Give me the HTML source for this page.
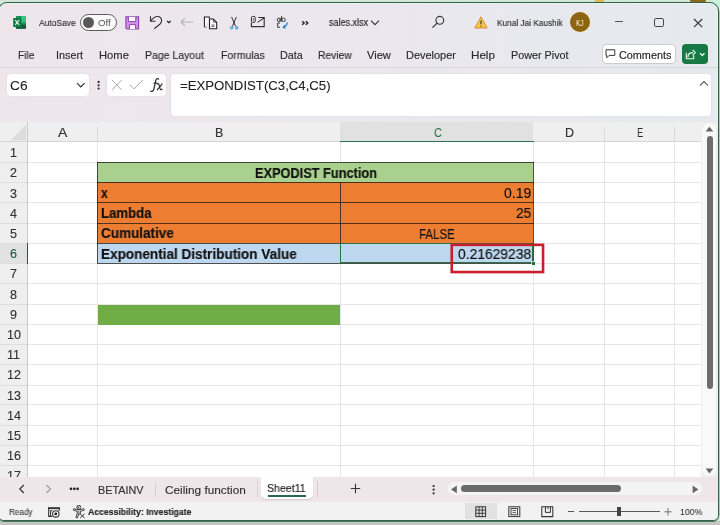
<!DOCTYPE html>
<html><head><meta charset="utf-8">
<style>
html,body{margin:0;padding:0;}
body{width:720px;height:525px;overflow:hidden;position:relative;background:#c8c9c8;font-family:"Liberation Sans",sans-serif;}
.t{position:absolute;white-space:nowrap;line-height:1;transform-origin:0 0;will-change:transform;-webkit-text-stroke:0.15px currentColor;}
.a{position:absolute;}
svg{position:absolute;overflow:visible;}
</style></head><body>
<!-- outside background -->
<div class=a style="left:0;top:0;width:720px;height:4px;background:#d2e6da"></div>
<div class=a style="left:712px;top:0;width:8px;height:525px;background:#cdf0dd"></div>
<div class=a style="left:595px;top:0;width:9px;height:3px;background:#e2b84a"></div>
<div class=a style="left:690px;top:0;width:16px;height:3px;background:#8b6a1a;border-radius:0 0 4px 4px"></div>
<div class=a style="left:0;top:521px;width:720px;height:4px;background:#c4c6c5"></div>
<!-- window -->
<div class=a style="left:-2px;top:2px;width:719px;height:517px;border:1px solid #36604a;border-radius:9px 9px 6px 6px;overflow:hidden;box-shadow:inset 0 0 0 1px #e4f7ec, 0 0.6px 0 0.3px #4f7d63;background:linear-gradient(90deg,#efe6ec 0%,#ebe7ee 45%,#e5eaee 100%);">
  <!-- tab bar and status bar bg -->
  <div class=a style="left:0;top:472.8px;width:721px;height:26.1px;background:#efe6ea;border-top:1px solid #e2dde0;box-sizing:border-box"></div>
  <div class=a style="left:0;top:498.9px;width:721px;height:18.1px;background:#f3f2f3"></div>
</div>

<!-- ===== title bar icons ===== -->
<!-- excel logo -->
<svg style="left:13px;top:16px" width="14" height="14" viewBox="0 0 14 14">
  <rect x="2.9" y="0" width="10.1" height="12.8" rx="0.8" fill="#1a9156"/>
  <rect x="8.2" y="0" width="4.8" height="6.4" rx="0.5" fill="#33c481"/>
  <rect x="2.9" y="8.6" width="10.1" height="4.2" rx="0.6" fill="#185c37"/>
  <rect x="0.2" y="2.1" width="8.2" height="8.8" rx="0.7" fill="#107c41"/>
  <path d="M2.3 4.2 L6.1 8.8 M6.1 4.2 L2.3 8.8" stroke="#f2fbf5" stroke-width="1.05"/>
</svg>
<!-- toggle -->
<div class=a style="left:80px;top:14.3px;width:34.5px;height:14.8px;border:0.9px solid #5c5c5c;border-radius:9px;background:#fbfafb"></div>
<div class=a style="left:83px;top:16.5px;width:11.2px;height:11.2px;border-radius:50%;background:#585858"></div>
<!-- save -->
<svg style="left:125px;top:15.5px" width="15" height="14" viewBox="0 0 15 14">
  <path d="M0.9 0.9 H13.6 V13 H1.9 L0.9 12 Z" fill="#d78ee8" stroke="#8e42ac" stroke-width="1.1"/>
  <path d="M3.4 0.9 V5.6 H10.8 V0.9" fill="#fff" stroke="#8e42ac" stroke-width="1"/>
  <path d="M4.4 13 V8.6 H10.6 V13" fill="#fff" stroke="#8e42ac" stroke-width="1"/>
</svg>
<!-- undo -->
<svg style="left:148px;top:15px" width="26" height="15" viewBox="0 0 26 15">
  <path d="M2.5 1.3 V6.2 H7.6" stroke="#333" stroke-width="1.15" fill="none"/>
  <path d="M2.8 6 C4.6 3.4 6.6 1.5 9.3 1.5 C12 1.5 13.6 3.4 13.6 5.6 C13.6 7.2 12.9 8.3 11.8 9.3 L6.2 13.7" stroke="#333" stroke-width="1.15" fill="none"/>
  <path d="M19.1 6.1 L20.9 7.7 L22.7 6.1" stroke="#222" stroke-width="1.3" fill="none"/>
</svg>
<!-- back arrow -->
<svg style="left:180px;top:17px" width="14" height="10" viewBox="0 0 14 10">
  <path d="M1 5 H13.2 M1 5 L5 1.2 M1 5 L5 8.8" stroke="#b3b0b3" stroke-width="1.1" fill="none"/>
</svg>
<!-- copy -->
<svg style="left:203px;top:15.5px" width="16" height="15" viewBox="0 0 16 15">
  <path d="M1.4 11.2 V0.9 H6.3 V2.8" stroke="#1e1e1e" stroke-width="1.05" fill="#fff"/>
  <path d="M1.4 11.2 H3.9" stroke="#8a8a8a" stroke-width="1.05" fill="none"/>
  <path d="M6.5 2.9 H10.2 L13.7 6.4 V12.8 H6.5 Z" stroke="#1e1e1e" stroke-width="1.05" fill="#fff" stroke-linejoin="round"/>
  <path d="M10.3 3 V5.4 Q10.3 6.2 11.1 6.2 H13.6" stroke="#333" stroke-width="0.9" fill="none"/>
  <path d="M8.3 9 H11.5 M8.3 10.6 H11.5" stroke="#555" stroke-width="0.9"/>
</svg>
<!-- scissors -->
<svg style="left:229px;top:15.5px" width="10" height="14" viewBox="0 0 10 14">
  <path d="M2.6 0.9 L6.6 10.4 M7.4 0.9 L3.4 10.4" stroke="#333" stroke-width="1" fill="none"/>
  <circle cx="2.6" cy="11.8" r="1.2" fill="#cfe6f4" stroke="#2f86c4" stroke-width="1"/>
  <circle cx="7.7" cy="11.8" r="1.2" fill="#cfe6f4" stroke="#2f86c4" stroke-width="1"/>
</svg>
<!-- mail-ish -->
<svg style="left:250px;top:15px" width="16" height="13" viewBox="0 0 16 13">
  <rect x="1.4" y="1.4" width="3.8" height="6" rx="1.3" stroke="#333" stroke-width="1" fill="none"/>
  <path d="M3.3 3.2 V6" stroke="#555" stroke-width="0.8"/>
  <path d="M1.4 7.6 V11.6 H14.2 V2.5 H8.3" stroke="#333" stroke-width="1.15" fill="none"/>
  <path d="M7.6 7.4 L13.3 3.4" stroke="#333" stroke-width="1.05" fill="none"/>
  <circle cx="13.4" cy="3.3" r="0.8" fill="#222"/>
</svg>
<!-- spelling -->
<svg style="left:275px;top:15px" width="15" height="15" viewBox="0 0 15 15">
  <ellipse cx="3.7" cy="4.8" rx="1.45" ry="1.75" stroke="#3a3a3a" stroke-width="1" fill="none"/>
  <path d="M5.2 2.9 V6.7" stroke="#3a3a3a" stroke-width="1"/>
  <path d="M6.6 1 V6.7" stroke="#3a3a3a" stroke-width="1"/>
  <ellipse cx="8.6" cy="4.8" rx="1.7" ry="1.75" stroke="#3a3a3a" stroke-width="1" fill="none"/>
  <path d="M5 8 H2.7 V12.3 H5" stroke="#3a3a3a" stroke-width="1" fill="none"/>
  <path d="M12.3 7.3 C12.1 9.8 10.6 11.6 8.6 12.3" stroke="#2b7fc4" stroke-width="1.25" fill="none"/>
  <path d="M9.9 10.2 L8.3 12.4 L10.6 13.2" stroke="#2b7fc4" stroke-width="1.2" fill="none"/>
</svg>
<!-- >> -->
<svg style="left:301px;top:20px" width="9" height="6" viewBox="0 0 9 6">
  <path d="M1.2 1.2 L3.2 3 L1.2 4.8 M4.8 1.2 L6.8 3 L4.8 4.8" stroke="#222" stroke-width="1.35" fill="none"/>
</svg>
<!-- filename chevron -->
<svg style="left:370px;top:19px" width="11" height="8" viewBox="0 0 11 8">
  <path d="M1 1.6 L5 5.6 L9 1.6" stroke="#333" stroke-width="1.1" fill="none"/>
</svg>
<!-- search -->
<svg style="left:431px;top:15px" width="15" height="15" viewBox="0 0 15 15">
  <circle cx="8.8" cy="5.3" r="3.9" stroke="#333" stroke-width="1.1" fill="none"/>
  <path d="M6.1 8.1 L1.5 12.7" stroke="#333" stroke-width="1.2"/>
</svg>
<!-- warning -->
<svg style="left:474px;top:15.5px" width="14" height="13" viewBox="0 0 14 13">
  <path d="M7 0.9 L13.2 12 H0.8 Z" fill="#f6c64a" stroke="#e08b2b" stroke-width="1" stroke-linejoin="round"/>
  <path d="M7 4.5 V8.3" stroke="#3b3b3b" stroke-width="1.2"/>
  <circle cx="7" cy="10.1" r="0.7" fill="#3b3b3b"/>
</svg>
<!-- avatar -->
<div class=a style="left:569.5px;top:12px;width:20px;height:20px;border-radius:50%;background:#8b6511;box-shadow:0 0 0 0.6px #f4e8c8"></div>
<!-- window controls -->
<div class=a style="left:615px;top:21.2px;width:8.2px;height:1.3px;background:#555"></div>
<div class=a style="left:654.3px;top:18px;width:7.4px;height:7.4px;border:1.2px solid #444;border-radius:1.8px"></div>
<svg style="left:693px;top:17.5px" width="10" height="10" viewBox="0 0 10 10">
  <path d="M1 1 L9.2 9.2 M9.2 1 L1 9.2" stroke="#333" stroke-width="1.1"/>
</svg>

<!-- ===== ribbon row ===== -->
<div class=a style="left:0;top:66.5px;width:718px;height:1px;background:#dcd6da"></div>
<div class=a style="left:602.3px;top:44.3px;width:72px;height:18px;background:#fff;border:0.9px solid #cfcacd;border-radius:4px"></div>
<svg style="left:605px;top:49px" width="11" height="10" viewBox="0 0 11 10">
  <path d="M1 0.8 H9.8 V6.4 H4.2 L1.8 8.8 V6.4 H1 Z" stroke="#333" stroke-width="1" fill="none" stroke-linejoin="round"/>
</svg>
<div class=a style="left:682px;top:44.3px;width:26.2px;height:19.3px;background:#177a45;border-radius:4px"></div>
<svg style="left:684px;top:47px" width="22" height="14" viewBox="0 0 22 14">
  <path d="M2.3 5.8 V11.7 H9.7 V8.4" stroke="#e6fbee" stroke-width="1.1" fill="none"/>
  <path d="M3.9 10.2 C3.9 7.3 5.6 5.7 8.9 5.7" stroke="#e6fbee" stroke-width="1.3" fill="none"/>
  <path d="M8.6 2.9 L11.3 5.6 L8.6 8.4" stroke="#e6fbee" stroke-width="1.2" fill="none" stroke-linejoin="round"/>
  <path d="M16.1 6.3 L18.3 8.5 L20.5 6.3" stroke="#e6fbee" stroke-width="1.3" fill="none"/>
</svg>

<!-- ===== formula bar ===== -->
<div class=a style="left:7px;top:73.5px;width:82px;height:22.5px;background:#fff;border-radius:4px;box-shadow:0 0 0 0.6px #e2dde1"></div>
<svg style="left:76px;top:81px" width="10" height="8" viewBox="0 0 10 8">
  <path d="M1 2.2 L4.8 6 L8.6 2.2" stroke="#333" stroke-width="1.2" fill="none"/>
</svg>
<svg style="left:95.5px;top:79.5px" width="5" height="11" viewBox="0 0 5 11">
  <circle cx="2.6" cy="2" r="1.15" fill="#333"/><circle cx="2.6" cy="5.3" r="1.15" fill="#333"/><circle cx="2.6" cy="8.6" r="1.15" fill="#333"/>
</svg>
<div class=a style="left:106.8px;top:74px;width:59.6px;height:22.3px;background:#fff;border-radius:4px;box-shadow:0 0 0 0.6px #e2dde1"></div>
<svg style="left:111px;top:79px" width="12" height="12" viewBox="0 0 12 12">
  <path d="M1 1 L10.6 10.9 M10.6 1 L1 10.9" stroke="#ababab" stroke-width="1"/>
</svg>
<svg style="left:129px;top:79px" width="15" height="11" viewBox="0 0 15 11">
  <path d="M1 5.8 L5 9.9 L14 1" stroke="#ababab" stroke-width="1" fill="none"/>
</svg>
<svg style="left:149px;top:77px" width="15" height="16" viewBox="0 0 15 16">
  <path d="M9.6 2.1 C8.9 1.3 7.4 1.4 6.9 3.2 L4.7 12.6 C4.3 14.2 3.2 14.9 1.7 14.2" stroke="#2a2a2a" stroke-width="1.25" fill="none" stroke-linecap="round"/>
  <path d="M4.6 6.1 H8.5" stroke="#2a2a2a" stroke-width="1.1"/>
  <path d="M8.1 6.9 C9 6.3 9.7 6.6 10.1 8 L11.1 11.7 C11.4 12.9 12.2 13 13.1 12.2" stroke="#2a2a2a" stroke-width="1.15" fill="none" stroke-linecap="round"/>
  <path d="M13.2 6.9 L8.3 12.9" stroke="#2a2a2a" stroke-width="1.1" stroke-linecap="round"/>
</svg>
<div class=a style="left:170.5px;top:73.5px;width:540.2px;height:42.8px;background:#fff;border-radius:4px;box-shadow:0 0 0 0.6px #e2dde1"></div>
<svg style="left:698.5px;top:80px" width="10" height="7" viewBox="0 0 10 7">
  <path d="M1 5.6 L5 1.6 L9 5.6" stroke="#555" stroke-width="1.05" fill="none"/>
</svg>

<!-- ===== grid ===== -->
<div class=a style="left:0;top:121.5px;width:701px;height:20px;background:#efefef"></div>
<div class=a style="left:0;top:142px;width:27px;height:334.5px;background:#efefef"></div>
<div class=a style="left:28px;top:142px;width:673px;height:334.5px;background:#fff"></div>
<div class=a style="left:340px;top:121.5px;width:193px;height:20px;background:#e1e1e1"></div>
<svg style="left:10px;top:123.5px" width="17" height="17" viewBox="0 0 17 17">
  <path d="M0.8 16.2 H16 V0.4 Z" fill="#dcdcdc"/>
</svg>
<div class=a style="left:97px;top:127px;width:1px;height:14px;background:#dadada"></div>
<div class=a style="left:604px;top:127px;width:1px;height:14px;background:#dadada"></div>
<div class=a style="left:674px;top:127px;width:1px;height:14px;background:#dadada"></div>
<div class=a style="left:0;top:140.8px;width:701px;height:1.6px;background:#d6d6d6"></div>
<div class=a style="left:27px;top:121.5px;width:1px;height:355px;background:#c9c9c9"></div>
<div class=a style="left:0;top:243.00px;width:27px;height:20.2px;background:#e1e1e1"></div>
<div style="position:absolute;left:97.00px;top:142.00px;width:1.00px;height:334.50px;background:#e6e6e6"></div>
<div style="position:absolute;left:340.00px;top:142.00px;width:1.00px;height:334.50px;background:#e6e6e6"></div>
<div style="position:absolute;left:533.00px;top:142.00px;width:1.00px;height:334.50px;background:#e6e6e6"></div>
<div style="position:absolute;left:604.00px;top:142.00px;width:1.00px;height:334.50px;background:#e6e6e6"></div>
<div style="position:absolute;left:674.00px;top:142.00px;width:1.00px;height:334.50px;background:#e6e6e6"></div>
<div style="position:absolute;left:28.00px;top:162.00px;width:673.00px;height:1.00px;background:#e6e6e6"></div>
<div style="position:absolute;left:0.00px;top:162.00px;width:27.00px;height:1.00px;background:#dedede"></div>
<div style="position:absolute;left:28.00px;top:182.00px;width:673.00px;height:1.00px;background:#e6e6e6"></div>
<div style="position:absolute;left:0.00px;top:182.00px;width:27.00px;height:1.00px;background:#dedede"></div>
<div style="position:absolute;left:28.00px;top:202.00px;width:673.00px;height:1.00px;background:#e6e6e6"></div>
<div style="position:absolute;left:0.00px;top:202.00px;width:27.00px;height:1.00px;background:#dedede"></div>
<div style="position:absolute;left:28.00px;top:223.00px;width:673.00px;height:1.00px;background:#e6e6e6"></div>
<div style="position:absolute;left:0.00px;top:223.00px;width:27.00px;height:1.00px;background:#dedede"></div>
<div style="position:absolute;left:28.00px;top:243.00px;width:673.00px;height:1.00px;background:#e6e6e6"></div>
<div style="position:absolute;left:0.00px;top:243.00px;width:27.00px;height:1.00px;background:#dedede"></div>
<div style="position:absolute;left:28.00px;top:263.00px;width:673.00px;height:1.00px;background:#e6e6e6"></div>
<div style="position:absolute;left:0.00px;top:263.00px;width:27.00px;height:1.00px;background:#dedede"></div>
<div style="position:absolute;left:28.00px;top:283.00px;width:673.00px;height:1.00px;background:#e6e6e6"></div>
<div style="position:absolute;left:0.00px;top:283.00px;width:27.00px;height:1.00px;background:#dedede"></div>
<div style="position:absolute;left:28.00px;top:304.00px;width:673.00px;height:1.00px;background:#e6e6e6"></div>
<div style="position:absolute;left:0.00px;top:304.00px;width:27.00px;height:1.00px;background:#dedede"></div>
<div style="position:absolute;left:28.00px;top:324.00px;width:673.00px;height:1.00px;background:#e6e6e6"></div>
<div style="position:absolute;left:0.00px;top:324.00px;width:27.00px;height:1.00px;background:#dedede"></div>
<div style="position:absolute;left:28.00px;top:344.00px;width:673.00px;height:1.00px;background:#e6e6e6"></div>
<div style="position:absolute;left:0.00px;top:344.00px;width:27.00px;height:1.00px;background:#dedede"></div>
<div style="position:absolute;left:28.00px;top:364.00px;width:673.00px;height:1.00px;background:#e6e6e6"></div>
<div style="position:absolute;left:0.00px;top:364.00px;width:27.00px;height:1.00px;background:#dedede"></div>
<div style="position:absolute;left:28.00px;top:385.00px;width:673.00px;height:1.00px;background:#e6e6e6"></div>
<div style="position:absolute;left:0.00px;top:385.00px;width:27.00px;height:1.00px;background:#dedede"></div>
<div style="position:absolute;left:28.00px;top:404.00px;width:673.00px;height:1.00px;background:#e6e6e6"></div>
<div style="position:absolute;left:0.00px;top:404.00px;width:27.00px;height:1.00px;background:#dedede"></div>
<div style="position:absolute;left:28.00px;top:425.00px;width:673.00px;height:1.00px;background:#e6e6e6"></div>
<div style="position:absolute;left:0.00px;top:425.00px;width:27.00px;height:1.00px;background:#dedede"></div>
<div style="position:absolute;left:28.00px;top:445.00px;width:673.00px;height:1.00px;background:#e6e6e6"></div>
<div style="position:absolute;left:0.00px;top:445.00px;width:27.00px;height:1.00px;background:#dedede"></div>
<div style="position:absolute;left:28.00px;top:465.00px;width:673.00px;height:1.00px;background:#e6e6e6"></div>
<div style="position:absolute;left:0.00px;top:465.00px;width:27.00px;height:1.00px;background:#dedede"></div>
<div style="position:absolute;left:97.00px;top:162.00px;width:436.00px;height:20.00px;background:#a9d08e"></div>
<div style="position:absolute;left:97.00px;top:182.00px;width:436.00px;height:61.00px;background:#ed7d31"></div>
<div style="position:absolute;left:97.00px;top:243.00px;width:436.00px;height:20.00px;background:#bdd7ee"></div>
<div style="position:absolute;left:97.50px;top:304.50px;width:242.50px;height:20.00px;background:#70ad47"></div>
<div style="position:absolute;left:97.00px;top:162.00px;width:437.00px;height:1.00px;background:rgba(20,20,20,0.72)"></div>
<div style="position:absolute;left:97.00px;top:182.00px;width:437.00px;height:1.00px;background:rgba(20,20,20,0.72)"></div>
<div style="position:absolute;left:97.00px;top:202.00px;width:437.00px;height:1.00px;background:rgba(20,20,20,0.72)"></div>
<div style="position:absolute;left:97.00px;top:223.00px;width:437.00px;height:1.00px;background:rgba(20,20,20,0.72)"></div>
<div style="position:absolute;left:97.00px;top:243.00px;width:437.00px;height:1.00px;background:rgba(20,20,20,0.72)"></div>
<div style="position:absolute;left:97.00px;top:263.00px;width:437.00px;height:1.00px;background:rgba(20,20,20,0.72)"></div>
<div style="position:absolute;left:97.00px;top:162.00px;width:1.00px;height:101.00px;background:rgba(20,20,20,0.72)"></div>
<div style="position:absolute;left:533.00px;top:162.00px;width:1.00px;height:101.00px;background:rgba(20,20,20,0.72)"></div>
<div style="position:absolute;left:340.00px;top:182.00px;width:1.00px;height:81.00px;background:rgba(20,20,20,0.72)"></div>
<div class=a style="left:340px;top:140.9px;width:193.5px;height:1.5px;background:#2a7350"></div>
<div class=a style="left:26.6px;top:243.00px;width:1.4px;height:20.6px;background:#1f5c3d"></div>
<!-- selection C6 -->
<div class=a style="left:339.6px;top:242.6px;width:193.6px;height:20.5px;border:1.1px solid #2a7149;box-sizing:border-box;"></div>
<div class=a style="left:532px;top:262px;width:3.2px;height:3px;background:#1f6e43;box-shadow:0 0 0 0.6px #fff"></div>
<!-- red highlight -->
<svg style="left:450px;top:243px" width="95" height="31" viewBox="0 0 95 31">
  <rect x="1.75" y="1.85" width="91.3" height="27.2" stroke="#c91f2d" stroke-width="2.6" fill="none"/>
</svg>

<!-- vertical scrollbar -->
<div class=a style="left:701px;top:121.5px;width:17px;height:355px;background:#efefef"></div>
<div class=a style="left:702.3px;top:123px;width:13.8px;height:352.5px;border-radius:7px;background:#f9f9f9"></div>
<svg style="left:705px;top:126px" width="9" height="6" viewBox="0 0 9 6">
  <path d="M0.6 5.6 L4.4 0.8 L8.3 5.6 Z" fill="#666"/>
</svg>
<div class=a style="left:706.5px;top:136px;width:6.4px;height:253px;border-radius:3.2px;background:#6d6d6d"></div>
<svg style="left:705px;top:467.5px" width="9" height="6" viewBox="0 0 9 6">
  <path d="M0.6 0.6 L4.4 5.6 L8.3 0.6 Z" fill="#666"/>
</svg>

<!-- ===== sheet tab bar ===== -->
<svg style="left:18px;top:484px" width="8" height="10" viewBox="0 0 8 10">
  <path d="M5.8 1 L1.8 5 L5.8 9" stroke="#333" stroke-width="1.2" fill="none"/>
</svg>
<svg style="left:45px;top:484px" width="8" height="10" viewBox="0 0 8 10">
  <path d="M1.5 1 L5.5 5 L1.5 9" stroke="#9a9a9a" stroke-width="1.1" fill="none"/>
</svg>
<svg style="left:68px;top:486px" width="12" height="5" viewBox="0 0 12 5">
  <circle cx="3" cy="2.8" r="1.35" fill="#222"/><circle cx="6.3" cy="2.8" r="1.35" fill="#222"/><circle cx="9.6" cy="2.8" r="1.35" fill="#222"/>
</svg>
<div class=a style="left:154.6px;top:482.8px;width:1px;height:14px;background:#d5cfd2"></div>
<div class=a style="left:257.2px;top:481px;width:1px;height:16px;background:#d5cfd2"></div>
<div class=a style="left:316.5px;top:481px;width:1px;height:16px;background:#d5cfd2"></div>
<div class=a style="left:260.6px;top:474px;width:52.2px;height:24.5px;background:#fff;border-radius:0 0 5px 5px;box-shadow:0 0.5px 0.8px rgba(0,0,0,0.12)"></div>
<div class=a style="left:267.8px;top:495.2px;width:37.8px;height:1.8px;background:#2b6a48"></div>
<svg style="left:350px;top:483px" width="11" height="11" viewBox="0 0 11 11">
  <path d="M5.5 0.8 V10.2 M0.8 5.5 H10.2" stroke="#333" stroke-width="1.1"/>
</svg>
<svg style="left:431px;top:484px" width="5" height="12" viewBox="0 0 5 12">
  <circle cx="2.6" cy="2.1" r="1.15" fill="#333"/><circle cx="2.6" cy="5.7" r="1.15" fill="#333"/><circle cx="2.6" cy="9.3" r="1.15" fill="#333"/>
</svg>
<!-- h scrollbar -->
<div class=a style="left:447.5px;top:481.8px;width:254.5px;height:13.5px;border-radius:7px;background:#f5f4f5"></div>
<svg style="left:450px;top:484.5px" width="8" height="9" viewBox="0 0 8 9">
  <path d="M6.8 0.6 L1 4.4 L6.8 8.2 Z" fill="#666"/>
</svg>
<div class=a style="left:461px;top:485.3px;width:160px;height:7px;border-radius:3.5px;background:#6b6b6b"></div>
<svg style="left:692px;top:484.5px" width="8" height="9" viewBox="0 0 8 9">
  <path d="M0.6 0.6 L6.4 4.4 L0.6 8.2 Z" fill="#666"/>
</svg>

<!-- ===== status bar ===== -->
<svg style="left:47px;top:506px" width="14" height="12" viewBox="0 0 14 12">
  <rect x="1.2" y="1.2" width="11.5" height="1.9" fill="#333"/>
  <path d="M1.7 1.2 V10.4 H5.2" stroke="#333" stroke-width="1.1" fill="none"/>
  <path d="M12.2 1.2 V5" stroke="#333" stroke-width="1.1" fill="none"/>
  <path d="M3.6 10.2 V4.6 H5.4" stroke="#333" stroke-width="1" fill="none"/>
  <circle cx="8.8" cy="7.9" r="3.2" stroke="#333" stroke-width="1.1" fill="#fafafa"/>
  <circle cx="8.8" cy="7.9" r="1.35" fill="#1a1a1a"/>
</svg>
<svg style="left:73px;top:505px" width="13" height="14" viewBox="0 0 13 14">
  <g stroke="#333" stroke-width="2.5" fill="none" stroke-linecap="round" stroke-linejoin="round">
    <circle cx="5.8" cy="2.4" r="1.2"/>
    <path d="M1.2 4.6 C3 5.4 4.5 5.6 5.8 5.6 C7.1 5.6 8.6 5.4 10.4 4.6"/>
    <path d="M5 5.8 V8.6 L3.8 12 M6.6 5.8 V8.2"/>
  </g>
  <g stroke="#f6f6f6" stroke-width="0.8" fill="none" stroke-linecap="round" stroke-linejoin="round">
    <circle cx="5.8" cy="2.4" r="1.2"/>
    <path d="M1.2 4.6 C3 5.4 4.5 5.6 5.8 5.6 C7.1 5.6 8.6 5.4 10.4 4.6"/>
    <path d="M5 5.8 V8.6 L3.8 12 M6.6 5.8 V8.2"/>
  </g>
  <path d="M7.2 8.8 L11.6 13 M11.6 8.8 L7.2 13" stroke="#333" stroke-width="1"/>
</svg>
<div class=a style="left:464.6px;top:503.2px;width:32.3px;height:15.6px;background:#e1e1e1"></div>
<svg style="left:474.5px;top:506px" width="12" height="12" viewBox="0 0 12 12">
  <rect x="0.8" y="0.8" width="9.8" height="9.8" stroke="#333" stroke-width="1" fill="none"/>
  <path d="M4.1 0.8 V10.6 M7.3 0.8 V10.6 M0.8 4.1 H10.6 M0.8 7.3 H10.6" stroke="#333" stroke-width="0.9"/>
</svg>
<svg style="left:507.5px;top:506px" width="13" height="12" viewBox="0 0 13 12">
  <rect x="0.8" y="0.8" width="11" height="9.8" stroke="#333" stroke-width="1" fill="none"/>
  <rect x="3" y="2.6" width="6.6" height="6.2" stroke="#333" stroke-width="0.9" fill="none"/>
  <path d="M4.5 4.6 H8 M4.5 6.6 H8" stroke="#333" stroke-width="0.8"/>
</svg>
<svg style="left:540.5px;top:506px" width="13" height="12" viewBox="0 0 13 12">
  <path d="M0.8 0.8 H11.8 V10.6 H0.8 Z" stroke="#333" stroke-width="1.05" fill="none"/>
  <path d="M4.4 0.8 V6.4 H9.4 V0.8" stroke="#333" stroke-width="1" fill="none"/>
  <path d="M6.9 0.8 V3.2" stroke="#333" stroke-width="0.9" fill="none"/>
</svg>
<div class=a style="left:567.6px;top:511px;width:6.3px;height:1.1px;background:#555"></div>
<div class=a style="left:578.7px;top:511px;width:81px;height:1.2px;background:#5a5a5a"></div>
<div class=a style="left:617.2px;top:507.4px;width:3.9px;height:8.4px;background:#444"></div>
<svg style="left:663.5px;top:506.5px" width="9" height="10" viewBox="0 0 9 10">
  <path d="M4 1 V8.6 M0.4 4.8 H7.6" stroke="#666" stroke-width="0.9"/>
</svg>

<div class=t style="left:38.66px;top:18.00px;font-size:9.5px;font-weight:400;color:#303030;transform:scaleX(0.8901);">AutoSave</div>
<div class=t style="left:97.61px;top:17.80px;font-size:9.5px;font-weight:400;color:#555;transform:scaleX(1.0221);-webkit-text-stroke:0;">Off</div>
<div class=t style="left:328.64px;top:18.40px;font-size:10px;font-weight:400;color:#262626;transform:scaleX(0.9023);">sales.xlsx</div>
<div class=t style="left:496.67px;top:18.40px;font-size:9.5px;font-weight:400;color:#303030;transform:scaleX(0.8693);">Kunal Jai Kaushik</div>
<div class=t style="left:575.95px;top:18.80px;font-size:8.5px;font-weight:400;color:#f3e6c4;transform:scaleX(0.7358);">KJ</div>
<div class=t style="left:17.59px;top:49.75px;font-size:10.8px;font-weight:400;color:#2b2b2b;transform:scaleX(0.9430);">File</div>
<div class=t style="left:55.57px;top:49.75px;font-size:10.8px;font-weight:400;color:#2b2b2b;transform:scaleX(0.9942);">Insert</div>
<div class=t style="left:98.55px;top:49.75px;font-size:10.8px;font-weight:400;color:#2b2b2b;transform:scaleX(1.0376);">Home</div>
<div class=t style="left:144.58px;top:49.75px;font-size:10.8px;font-weight:400;color:#2b2b2b;transform:scaleX(0.9703);">Page Layout</div>
<div class=t style="left:220.58px;top:49.75px;font-size:10.8px;font-weight:400;color:#2b2b2b;transform:scaleX(0.9743);">Formulas</div>
<div class=t style="left:279.57px;top:49.75px;font-size:10.8px;font-weight:400;color:#2b2b2b;">Data</div>
<div class=t style="left:317.59px;top:49.75px;font-size:10.8px;font-weight:400;color:#2b2b2b;transform:scaleX(0.9554);">Review</div>
<div class=t style="left:366.56px;top:49.75px;font-size:10.8px;font-weight:400;color:#2b2b2b;transform:scaleX(1.0289);">View</div>
<div class=t style="left:405.56px;top:49.75px;font-size:10.8px;font-weight:400;color:#2b2b2b;transform:scaleX(1.0133);">Developer</div>
<div class=t style="left:470.53px;top:49.75px;font-size:10.8px;font-weight:400;color:#2b2b2b;transform:scaleX(1.0770);">Help</div>
<div class=t style="left:510.57px;top:49.75px;font-size:10.8px;font-weight:400;color:#2b2b2b;">Power Pivot</div>
<div class=t style="left:618.77px;top:49.90px;font-size:10.5px;font-weight:400;color:#262626;transform:scaleX(1.0315);">Comments</div>
<div class=t style="left:10.45px;top:79.00px;font-size:13px;font-weight:400;color:#222;transform:scaleX(1.0587);-webkit-text-stroke:0.1px currentColor;">C6</div>
<div class=t style="left:179.97px;top:79.40px;font-size:13px;font-weight:400;color:#222;transform:scaleX(1.0142);-webkit-text-stroke:0.1px currentColor;">=EXPONDIST(C3,C4,C5)</div>
<div class=t style="left:58.44px;top:127.30px;font-size:12.5px;font-weight:400;color:#333;transform:scaleX(1.1166);">A</div>
<div class=t style="left:215.32px;top:127.30px;font-size:12.5px;font-weight:400;color:#333;transform:scaleX(0.9668);">B</div>
<div class=t style="left:433.76px;top:127.30px;font-size:12.5px;font-weight:400;color:#2a7350;transform:scaleX(0.8716);-webkit-text-stroke:0.1px currentColor;">C</div>
<div class=t style="left:564.81px;top:127.30px;font-size:12.5px;font-weight:400;color:#333;transform:scaleX(0.9837);">D</div>
<div class=t style="left:636.63px;top:127.30px;font-size:12.5px;font-weight:400;color:#333;transform:scaleX(0.7353);">E</div>
<div class=t style="left:255.09px;top:167.00px;font-size:13.8px;font-weight:700;color:#111;transform:scaleX(0.9247);">EXPODIST Function</div>
<div class=t style="left:100.71px;top:186.90px;font-size:13.8px;font-weight:700;color:#111;transform:scaleX(0.8810);">x</div>
<div class=t style="left:100.67px;top:207.00px;font-size:13.8px;font-weight:700;color:#111;transform:scaleX(0.9556);">Lambda</div>
<div class=t style="left:100.66px;top:227.10px;font-size:13.8px;font-weight:700;color:#111;transform:scaleX(0.9786);">Cumulative</div>
<div class=t style="left:100.66px;top:247.50px;font-size:13.8px;font-weight:700;color:#111;transform:scaleX(0.9817);">Exponential Distribution Value</div>
<div class=t style="left:504.24px;top:186.00px;font-size:14px;font-weight:400;color:#111;">0.19</div>
<div class=t style="left:516.15px;top:206.20px;font-size:14px;font-weight:400;color:#111;transform:scaleX(0.9752);">25</div>
<div class=t style="left:419.34px;top:226.60px;font-size:14px;font-weight:400;color:#111;transform:scaleX(0.8193);">FALSE</div>
<div class=t style="left:458.20px;top:246.80px;font-size:14px;font-weight:400;color:#111;transform:scaleX(0.9883);">0.21629238</div>
<div class=t style="left:98.17px;top:484.90px;font-size:10.8px;font-weight:400;color:#333;">BETAINV</div>
<div class=t style="left:165.23px;top:484.90px;font-size:10.8px;font-weight:400;color:#333;transform:scaleX(1.0951);">Ceiling function</div>
<div class=t style="left:267.38px;top:482.60px;font-size:11px;font-weight:400;color:#222;transform:scaleX(0.9620);">Sheet11</div>
<div class=t style="left:9.37px;top:508.20px;font-size:8.8px;font-weight:400;color:#3a3a3a;transform:scaleX(0.9259);-webkit-text-stroke:0.1px currentColor;">Ready</div>
<div class=t style="left:88.05px;top:508.10px;font-size:9px;font-weight:700;color:#222;transform:scaleX(0.9614);">Accessibility: Investigate</div>
<div class=t style="left:680.45px;top:508.10px;font-size:8.8px;font-weight:400;color:#3a3a3a;transform:scaleX(0.9864);-webkit-text-stroke:0.1px currentColor;">100%</div>
<div class=a style="left:0;top:142px;width:27px;height:334.6px;overflow:hidden"><div class=t style="left:10.32px;top:5.30px;font-size:12.5px;font-weight:400;color:#333;">1</div>
<div class=t style="left:10.32px;top:25.49px;font-size:12.5px;font-weight:400;color:#333;">2</div>
<div class=t style="left:10.32px;top:45.68px;font-size:12.5px;font-weight:400;color:#333;">3</div>
<div class=t style="left:10.32px;top:65.87px;font-size:12.5px;font-weight:400;color:#333;">4</div>
<div class=t style="left:10.32px;top:86.06px;font-size:12.5px;font-weight:400;color:#333;">5</div>
<div class=t style="left:10.32px;top:106.25px;font-size:12.5px;font-weight:400;color:#1f5c3d;">6</div>
<div class=t style="left:10.32px;top:126.44px;font-size:12.5px;font-weight:400;color:#333;">7</div>
<div class=t style="left:10.32px;top:146.63px;font-size:12.5px;font-weight:400;color:#333;">8</div>
<div class=t style="left:10.32px;top:166.82px;font-size:12.5px;font-weight:400;color:#333;">9</div>
<div class=t style="left:6.85px;top:187.01px;font-size:12.5px;font-weight:400;color:#333;">10</div>
<div class=t style="left:7.31px;top:207.20px;font-size:12.5px;font-weight:400;color:#333;">11</div>
<div class=t style="left:6.85px;top:227.39px;font-size:12.5px;font-weight:400;color:#333;">12</div>
<div class=t style="left:6.85px;top:247.58px;font-size:12.5px;font-weight:400;color:#333;">13</div>
<div class=t style="left:6.85px;top:267.77px;font-size:12.5px;font-weight:400;color:#333;">14</div>
<div class=t style="left:6.85px;top:287.96px;font-size:12.5px;font-weight:400;color:#333;">15</div>
<div class=t style="left:6.85px;top:308.15px;font-size:12.5px;font-weight:400;color:#333;">16</div>
<div class=t style="left:6.85px;top:328.34px;font-size:12.5px;font-weight:400;color:#333;">17</div></div>
</body></html>
